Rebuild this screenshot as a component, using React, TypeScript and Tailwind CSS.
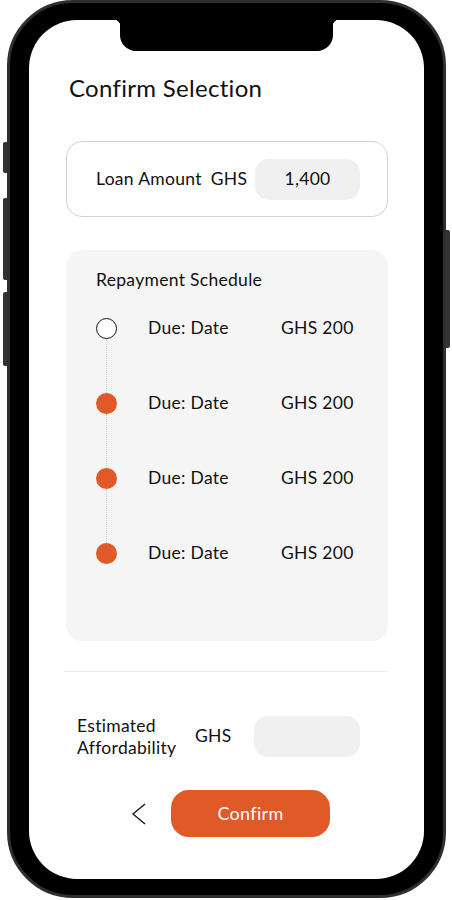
import React from "react";

const font = { fontFamily: "Lato, 'Open Sans', sans-serif" };

function Dot({ filled }: { filled: boolean }) {
  return filled ? (
    <div className="w-[21px] h-[21px] rounded-full bg-[#e05a28] shrink-0" />
  ) : (
    <div className="w-[21px] h-[21px] rounded-full border-[1.5px] border-[#111] bg-white shrink-0" />
  );
}

function Row({ filled }: { filled: boolean }) {
  return (
    <div className="flex items-center h-[21px]">
      <Dot filled={filled} />
      <span className="ml-[31px] w-[133px] text-[17.5px] tracking-[0.3px] text-[#111]">Due: Date</span>
      <span className="text-[17.5px] tracking-[0.3px] text-[#111]">GHS 200</span>
    </div>
  );
}

function Connector() {
  return (
    <div className="h-[54px] w-[21px] flex justify-center">
      <div className="h-full border-l border-dotted border-[#d4c8c8]" />
    </div>
  );
}

export default function App() {
  return (
    <div className="relative w-[452px] h-[900px] bg-white overflow-hidden" style={font}>
      {/* side buttons */}
      <div className="absolute left-[3px] top-[142px] w-[6px] h-[31px] rounded-l-[2px] bg-[#333]" />
      <div className="absolute left-[3px] top-[198px] w-[6px] h-[82px] rounded-l-[2px] bg-[#333]" />
      <div className="absolute left-[3px] top-[292px] w-[6px] h-[74px] rounded-l-[2px] bg-[#333]" />
      <div className="absolute left-[444px] top-[230px] w-[6px] h-[118px] rounded-r-[2px] bg-[#333]" />

      <div className="ml-[7px] w-[439px] h-[898px] rounded-[66px] bg-black border-[3px] border-[#2f2f2f] pt-[17px] pb-[16px] px-[19px] relative">
        <div className="relative w-full h-full bg-white rounded-[48px] overflow-hidden flex flex-col">
          {/* notch */}
          <div className="absolute left-[91px] top-0 w-[213px] h-[31px] bg-black rounded-b-[16px]" />
          <div className="absolute left-[85px] top-0 w-[6px] h-[6px] bg-[radial-gradient(circle_at_0_100%,transparent_6px,black_6.5px)]" />
          <div className="absolute left-[304px] top-0 w-[6px] h-[6px] bg-[radial-gradient(circle_at_100%_100%,transparent_6px,black_6.5px)]" />

          <h1 className="mt-[54px] ml-[40px] text-[24px] leading-[28px] tracking-[0.3px] text-[#111] font-normal">
            Confirm Selection
          </h1>

          <div className="mt-[39px] ml-[37px] w-[322px] h-[76px] rounded-[16px] border border-[#d6d0d0] flex items-center pl-[29px] pr-[27px]">
            <span className="text-[17.5px] tracking-[0.3px] text-[#111]">Loan Amount</span>
            <span className="ml-[9px] text-[17.5px] tracking-[0.3px] text-[#111]">GHS</span>
            <div className="ml-auto w-[105px] h-[41px] rounded-[14px] bg-[#f0f0f0] flex items-center justify-center text-[17.5px] tracking-[0.3px] text-[#111]">
              1,400
            </div>
          </div>

          <div className="mt-[33px] ml-[37px] w-[322px] h-[391px] rounded-[16px] bg-[#f5f5f5] pl-[30px] pt-[20px]">
            <div className="text-[17.5px] tracking-[0.3px] leading-[20px] text-[#111]">Repayment Schedule</div>
            <div className="mt-[28px] flex flex-col">
              <Row filled={false} />
              <Connector />
              <Row filled />
              <Connector />
              <Row filled />
              <Connector />
              <Row filled />
            </div>
          </div>

          <div className="mt-[30px] ml-[35px] w-[324px] h-px bg-[#ebebeb]" />

          <div className="mt-[44px] ml-[48px] flex items-center h-[41px]">
            <div className="w-[118px] text-[17.5px] tracking-[0.3px] leading-[22px] text-[#111]">
              Estimated
              <br />
              Affordability
            </div>
            <span className="w-[59px] text-[17.5px] tracking-[0.3px] text-[#111]">GHS</span>
            <div className="w-[106px] h-[41px] rounded-[14px] bg-[#f0f0f0]" />
          </div>

          <div className="mt-[33px] flex items-center">
            <svg className="ml-[102px]" width="16" height="22" viewBox="0 0 16 22" fill="none">
              <path d="M14 1 L2 11 L14 21" stroke="#111" strokeWidth="1.3" />
            </svg>
            <button className="ml-[24px] w-[159px] h-[47px] rounded-[18px] bg-[#e05a28] text-white text-[18px] tracking-[0.3px]">
              Confirm
            </button>
          </div>
        </div>
      </div>
    </div>
  );
}
